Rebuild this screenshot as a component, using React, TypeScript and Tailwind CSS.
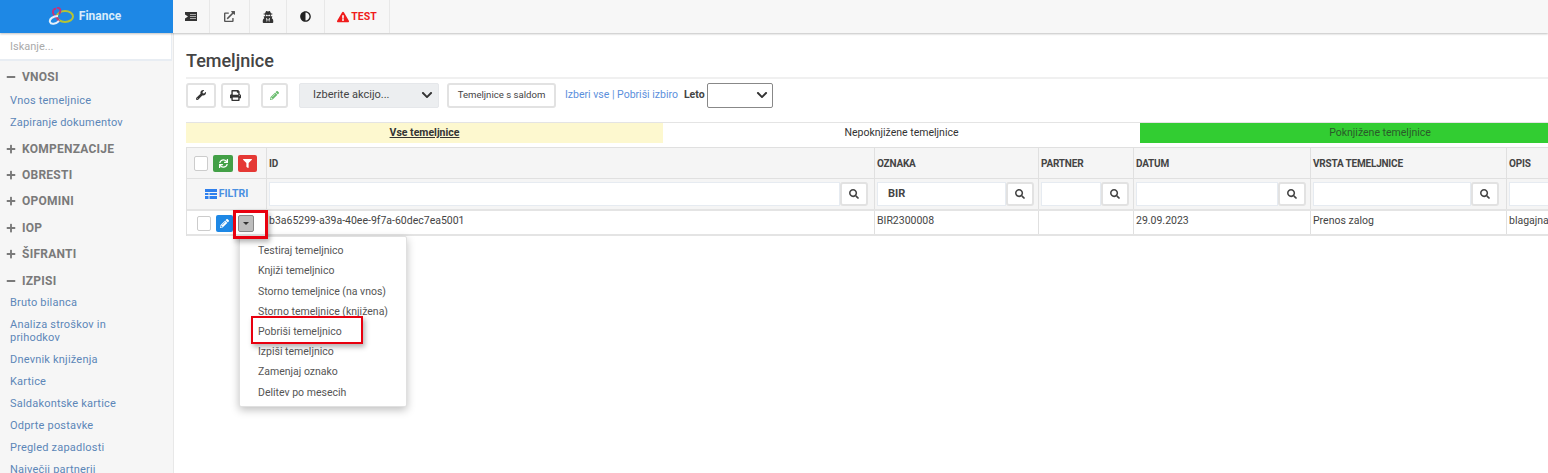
import React from "react";
import { FaWrench, FaPrint, FaPencilAlt, FaSearch, FaFilter, FaSync, FaExternalLinkAlt, FaAdjust, FaExclamationTriangle, FaMinus, FaPlus, FaChevronDown, FaUserSecret } from "react-icons/fa";

const Section = ({ title, open, items, gap = 0, shift = 0, tail = 0 }: { title: string; open?: boolean; items?: string[]; gap?: number; shift?: number; tail?: number }) => (
  <div style={{ marginTop: gap }}>
    <div className="flex items-center h-[26.4px] pl-[6px] text-[12px] font-bold text-[#7a7a7a] tracking-[0.25px]">
      {open ? <FaMinus size={10} className="mr-[6px] text-[#7a7a7a]" /> : <FaPlus size={10} className="mr-[6px] text-[#7a7a7a]" />}
      <span>{title}</span>
    </div>
    {items && (
      <div className="flex flex-col" style={{ marginTop: shift, paddingBottom: tail }}>
        {items.map((i) => (
          <div key={i} className="pl-[10px] pr-[40px] py-[4.5px] text-[11px] leading-[13px] text-[#5c86b8] tracking-[0.2px]">{i}</div>
        ))}
      </div>
    )}
  </div>
);

const TopItem = ({ children, w }: { children: React.ReactNode; w: number }) => (
  <div className="flex items-center justify-center border-r border-[#e8e8e8] h-full" style={{ width: w }}>{children}</div>
);

const SearchInput = ({ value, right = 4 }: { value?: string; right?: number }) => (
  <div className="flex h-[24px] w-full pl-[2px]" style={{ paddingRight: right }}>
    <div className="flex-1 min-w-0 bg-white border border-[#e6ebf1] text-[11px] font-bold text-[#444] pl-[10px] flex items-center">{value}</div>
    <div className="w-[28px] bg-white border-2 border-[#e2e2e2] rounded-[3px] flex items-center justify-center">
      <FaSearch size={10} className="text-[#444]" />
    </div>
  </div>
);

const cols = "grid grid-cols-[80px_608px_164px_95px_177px_196px_200px]";
const headCell = "border-r border-[#e0e0e0] px-[2px] flex items-center text-[10px] font-bold text-[#444] tracking-[-0.2px]";
const filterCell = "border-r border-[#e0e0e0] flex items-center";
const dataCell = "border-r border-[#e0e0e0] px-[2px] pb-[3px] flex items-center text-[10.5px] text-[#444]";

const menu = ["Testiraj temeljnico", "Knjiži temeljnico", "Storno temeljnice (na vnos)", "Storno temeljnice (knjižena)", "Pobriši temeljnico", "Izpiši temeljnico", "Zamenjaj oznako", "Delitev po mesecih"];

const toolBtn = "h-[25px] bg-white border-2 border-[#e2e2e2] rounded-[3px] flex items-center justify-center";

export default function App() {
  return (
    <div className="w-[1548px] h-[473px] overflow-hidden bg-white flex flex-col font-['Roboto',sans-serif] relative">
      <header className="flex h-[33px] shrink-0 bg-[#f7f7f7] shadow-[0_1px_2px_rgba(0,0,0,0.25)] z-10">
        <div className="w-[173px] bg-[#1e88e5] flex items-center justify-center gap-[5px] pr-[4px] pb-[2px]">
          <svg width="26" height="18" viewBox="0 0 26 18" fill="none">
            <ellipse cx="17" cy="9.500" rx="8" ry="5.500" stroke="#b5c334" strokeWidth="2" />
            <path d="M8 2 C5 1 4 6 6 8 C8 10 12 13 10 15" stroke="#c2337c" strokeWidth="2" />
            <path d="M9 1 C13 0 13 5 11 7" stroke="#c2337c" strokeWidth="2" />
            <path d="M10 9 C5 9 1 12 2 15 C3 18 8 17 11 14" stroke="#e3f0fb" strokeWidth="2" />
          </svg>
          <span className="text-[12px] font-bold text-[#d9ecfb]">Finance</span>
        </div>
        <TopItem w={37}>
          <svg width="12" height="9" viewBox="0 0 12 9"><path d="M0 0h12v9H0V6.500l3-2-3-2z" fill="#333" /><path d="M5 2.500h6M5 4.500h6M5 6.500h6" stroke="#ddd" strokeWidth="0.700" /></svg>
        </TopItem>
        <TopItem w={40}><FaExternalLinkAlt size={11} className="text-[#555]" /></TopItem>
        <TopItem w={37}><FaUserSecret size={12} className="text-[#333]" /></TopItem>
        <TopItem w={38}><FaAdjust size={11} className="text-[#222]" /></TopItem>
        <TopItem w={65}>
          <div className="flex items-center gap-[2px] text-[#f01c1c] text-[10.5px] font-bold">
            <FaExclamationTriangle size={12} />TEST
          </div>
        </TopItem>
        <div className="flex-1" />
      </header>
      <div className="flex flex-1 min-h-0">
        <aside className="w-[174px] shrink-0 bg-[#f6f6f6] border-r border-[#e8e8e8] overflow-hidden">
          <div className="h-[28px] pt-[2px] bg-white border-r border-b-2 border-[#e8edf3] flex items-center pl-[10px] text-[11px] text-[#aaa] mr-[1px]">Iskanje...</div>
          <div className="pt-[3px]">
            <Section title="VNOSI" open shift={-1} tail={2} items={["Vnos temeljnice", "Zapiranje dokumentov"]} />
            <Section title="KOMPENZACIJE" />
            <Section title="OBRESTI" />
            <Section title="OPOMINI" />
            <Section title="IOP" />
            <Section title="ŠIFRANTI" />
            <Section title="IZPISI" open shift={-2} items={["Bruto bilanca", "Analiza stroškov in prihodkov", "Dnevnik knjiženja", "Kartice", "Saldakontske kartice", "Odprte postavke", "Pregled zapadlosti", "Največji partnerji"]} />
          </div>
        </aside>
        <main className="flex-1 min-w-0 pl-[12px] overflow-hidden">
          <h1 className="pt-[17px] text-[18px] leading-[22px] font-medium text-[#444]">Temeljnice</h1>
          <div className="mt-[5px] border-t-2 border-[#f0f0f0] flex items-center h-[30px] pt-[4px]">
            <button className={`${toolBtn} w-[30px] mr-[5px]`}><FaWrench size={10} className="text-[#333]" /></button>
            <button className={`${toolBtn} w-[29px] mr-[11px]`}><FaPrint size={11} className="text-[#333]" /></button>
            <button className={`${toolBtn} w-[27px] mr-[11px]`}><FaPencilAlt size={9} className="text-[#66bb6a]" /></button>
            <div className="w-[140px] h-[25px] bg-[#eceef0] border border-[#e5e7ea] rounded-[2px] flex items-center justify-between pl-[13px] pr-[3px] text-[11px] text-[#444] mr-[8px]">
              Izberite akcijo...<FaChevronDown size={12} className="text-[#333] mr-[2px]" />
            </div>
            <button className={`${toolBtn} w-[109px] text-[9.6px] text-[#444] mr-[9px]`}>Temeljnice s saldom</button>
            <span className="text-[10.5px] text-[#5b8fdc] mr-[6px]">Izberi vse | Pobriši izbiro</span>
            <span className="text-[10.5px] font-bold text-[#444] mr-[2px]">Leto</span>
            <div className="w-[66px] h-[25px] bg-white border border-[#888] rounded-[2px] flex items-center justify-end pr-[4px]"><FaChevronDown size={12} className="text-[#333]" /></div>
          </div>
          <div className="w-[1434px] grid grid-cols-[477px_477px_480px] h-[21px] mt-[15px] border-t border-[#e4e4e4] text-[10.5px] text-[#333]">
            <div className="bg-[#fdf8cf] flex items-center justify-center font-bold underline">Vse temeljnice</div>
            <div className="flex items-center justify-center">Nepoknjižene temeljnice</div>
            <div className="bg-[#32cd32] flex items-center justify-center text-[#2a5a2a]">Poknjižene temeljnice</div>
          </div>
          <div className="w-[1521px] mt-[4px] border-t border-l border-[#e0e0e0]">
            <div className={`${cols} h-[31px] bg-[#f5f5f5] border-b border-[#e0e0e0]`}>
              <div className="border-r border-[#e0e0e0] flex items-center pl-[7px] gap-[5px]">
                <div className="w-[14px] h-[15px] bg-white border border-[#ccc] rounded-[2px]" />
                <div className="w-[20px] h-[17px] bg-[#43a047] rounded-[2px] flex items-center justify-center"><FaSync size={9} className="text-white" /></div>
                <div className="w-[19px] h-[17px] bg-[#e53935] rounded-[2px] flex items-center justify-center"><FaFilter size={9} className="text-white" /></div>
              </div>
              {["ID", "OZNAKA", "PARTNER", "DATUM", "VRSTA TEMELJNICE", "OPIS"].map((h) => <div key={h} className={headCell}>{h}</div>)}
            </div>
            <div className={`${cols} h-[32px] bg-[#f5f5f5] border-b-2 border-[#e4e4e4]`}>
              <div className="border-r border-[#e0e0e0] flex items-center justify-center gap-[2px] text-[10.5px] font-bold text-[#4a90e2]">
                <svg width="12" height="11" viewBox="0 0 12 11" fill="#2f80ed"><rect width="12" height="3" /><rect y="4" width="3.500" height="2" /><rect x="4.500" y="4" width="7.500" height="2" /><rect y="7" width="3.500" height="3" /><rect x="4.500" y="7" width="7.500" height="3" /></svg>
                FILTRI
              </div>
              <div className={filterCell}><SearchInput right={6} /></div>
              <div className={filterCell}><SearchInput value="BIR" /></div>
              <div className={filterCell}><SearchInput /></div>
              <div className={filterCell}><SearchInput /></div>
              <div className={filterCell}><SearchInput right={7} /></div>
              <div className={filterCell}><SearchInput /></div>
            </div>
            <div className={`${cols} h-[25px] border-b-2 border-[#e4e4e4] bg-white`}>
              <div className="border-r border-[#e0e0e0] flex items-center pl-[10px] pt-[2px] gap-[5px]">
                <div className="w-[14px] h-[15px] bg-white border border-[#ccc] rounded-[2px]" />
                <div className="w-[17px] h-[17px] bg-[#1e88e5] rounded-[2px] flex items-center justify-center"><FaPencilAlt size={9} className="text-white" /></div>
                <div className="w-[16px] h-[17px] bg-[#bdbdbd] border border-[#888] rounded-[2px] flex items-center justify-center"><div className="w-0 h-0 border-x-[3px] border-x-transparent border-t-[3px] border-t-[#333]" /></div>
              </div>
              <div className={dataCell}>b3a65299-a39a-40ee-9f7a-60dec7ea5001</div>
              <div className={dataCell}>BIR2300008</div>
              <div className={dataCell} />
              <div className={dataCell}>29.09.2023</div>
              <div className={dataCell}>Prenos zalog</div>
              <div className={dataCell}>blagajna</div>
            </div>
          </div>
        </main>
      </div>
      <div className="absolute left-[233px] top-[210px] w-[35px] h-[29px] border-[3px] border-[#e8000f] shadow-[2px_3px_5px_rgba(0,0,0,0.3)] z-20" />
      <div className="absolute left-[239px] top-[236px] w-[168px] h-[171px] bg-white rounded-[2px] border border-[#e0e0e0] shadow-[0_3px_8px_rgba(0,0,0,0.25)] z-10 pt-[4px]">
        {menu.map((m) => <div key={m} className="h-[20.2px] pl-[18px] flex items-center text-[10.5px] text-[#555]">{m}</div>)}
      </div>
      <div className="absolute left-[251px] top-[316px] w-[112px] h-[28px] border-[2px] border-[#e8000f] shadow-[2px_3px_5px_rgba(0,0,0,0.3)] z-20" />
    </div>
  );
}
